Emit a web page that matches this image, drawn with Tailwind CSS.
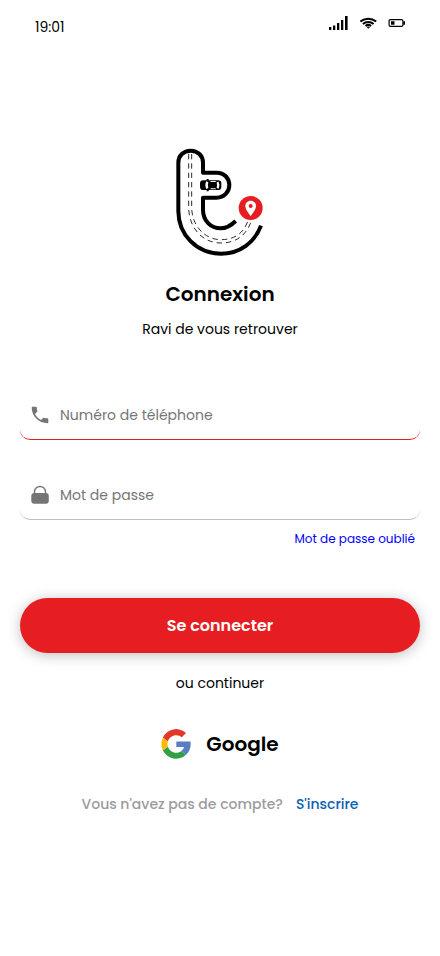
<!DOCTYPE html>
<html lang="fr">
<head>
<meta charset="utf-8">
<meta name="viewport" content="width=device-width, initial-scale=1">
<title>Connexion</title>
<script src="https://cdn.jsdelivr.net/npm/@tailwindcss/browser@4"></script>
</head>
<body class="min-h-screen bg-white text-black font-[Poppins,Inter,sans-serif]">
<header class="flex h-13 items-center justify-between pt-px pl-[35px] pr-[34px]">
  <time class="text-sm leading-5">19:01</time>
  <div class="flex items-center gap-[11px] pb-2">
    <svg class="h-4 w-5" viewBox="0 0 20 16" aria-hidden="true"><path d="M0 12h2.300v3H0zM4 10.500h2.300V15H4zM8 8h2.300v7H8zM12 5h2.300v10H12zM16 1h2.600v14H16z"/></svg>
    <svg class="h-4 w-[17px]" viewBox="0 0 17 16" fill="none" stroke="#000" stroke-width="2" aria-hidden="true"><path d="M.3 6.600C5 2.700 11.500 2.700 16.200 6.600M2.900 8.900c3-2.600 7.700-2.600 10.700 0M5.500 11c1.700-1.400 3.900-1.400 5.600 0"/><path fill="#000" stroke="none" d="M6.600 12q1.700-1.200 3.400 0l-1.700 1.800z"/></svg>
    <svg class="h-4 w-[18px]" viewBox="0 0 18 16" aria-hidden="true"><rect x="1.100" y="4.600" width="13.800" height="6.800" rx="1.300" fill="none" stroke="#000" stroke-width="1.200"/><path d="M3 6.200h3.500v3.600H3zM15.300 6.200H17v3.600h-1.700z"/></svg>
  </div>
</header>
<main class="flex flex-col items-center px-5 pt-22">
  <svg class="h-31 w-30" viewBox="0 0 360 372" fill="none" stroke="#000" role="img" aria-label="Logo">
    <path stroke-width="12" stroke-linejoin="round" d="M303 257C285 306 240 341 183 341C110 341 55 284 55 213V68C55 47 71 32 92 32S129 47 129 68V98H170C192 98 208 114 208 135S192 173 170 173H129V209C129 242 152 265 182 265C200 265 213 257 227 243"/>
    <path stroke-width="2.500" stroke-dasharray="16 12" d="M86 42V202C86 262 126 309 183 309C231 309 262 282 275 240M95 42V202C95 257 134 299 183 299C226 299 254 277 266 236"/>
    <g stroke="none">
      <rect x="120" y="121" width="64" height="29" rx="10" fill="#000"/>
      <path fill="#000" d="M140 117h6v5h-6zM140 149h6v5h-6z"/>
      <path fill="#fff" d="M139 124q-6 11 0 23l6-3q-3-8 0-17zM150 123h19l-3 3h-13zM150 148h19l-3-3h-13zM170 127l6-2q5 10 0 21l-6-2q2-8 0-17z"/>
      <circle cx="272" cy="204" r="36" fill="#e61e22"/>
      <path fill="#fff" fill-rule="evenodd" d="M272 182c-9 0-16 7-16 16 0 11 10 20 16 31 6-11 16-20 16-31 0-9-7-16-16-16zm0 10a6 6 0 1 1 0 12 6 6 0 0 1 0-12z"/>
    </g>
  </svg>
  <h1 class="mt-4 text-xl leading-7 font-semibold">Connexion</h1>
  <p class="mt-[11px] text-sm leading-5">Ravi de vous retrouver</p>
  <form class="mt-12 flex w-full flex-col">
    <label class="flex h-[53px] items-center gap-2 rounded-[10px] border-b border-[#e61e22] px-2 pt-1">
      <svg class="h-6 w-6 shrink-0" viewBox="-1 -1 26 26" fill="#757575" aria-hidden="true"><path d="M6.600 10.800c1.500 2.900 3.700 5.100 6.600 6.600l2.200-2.200c.3-.3.700-.4 1-.2 1.200.4 2.400.6 3.600.6.600 0 1 .4 1 1V20c0 .6-.4 1-1 1C10.600 21 3 13.400 3 4c0-.6.400-1 1-1h3.500c.6 0 1 .4 1 1 0 1.300.2 2.500.6 3.600.1.300 0 .7-.2 1z"/></svg>
      <input type="tel" aria-label="Numéro de téléphone" placeholder="Numéro de téléphone" class="h-8 min-w-0 flex-1 text-sm leading-8 outline-none placeholder:text-[#757575]">
    </label>
    <label class="mt-[27px] flex h-[53px] items-center gap-2 rounded-[10px] border-b border-[#bdbdbd] px-2 pt-1">
      <svg class="h-6 w-6 shrink-0" viewBox="0 0 24 24" aria-hidden="true"><rect x="3.300" y="10" width="17.500" height="10.700" rx="3" fill="#757575"/><path d="M6.500 11V9a5.500 5.500 0 0 1 11 0V11" fill="none" stroke="#757575" stroke-width="1.400"/></svg>
      <input type="password" aria-label="Mot de passe" placeholder="Mot de passe" class="h-8 min-w-0 flex-1 text-sm leading-8 outline-none placeholder:text-[#757575]">
    </label>
    <a href="#" class="mt-[11px] mr-[5px] self-end text-xs leading-4 text-[#0000ff]">Mot de passe oublié</a>
    <button type="submit" class="mt-[51px] h-[55px] w-full rounded-full bg-[#e61e22] text-base font-semibold text-white shadow-[0_2px_14px_rgba(0,0,0,0.25)]">Se connecter</button>
  </form>
  <p class="mt-5 text-sm leading-5">ou continuer</p>
  <button type="button" class="mt-9 flex items-center gap-[15px] text-xl leading-7 font-semibold">
    <svg class="h-[30px] w-[30px]" viewBox="0 0 47 48" aria-hidden="true"><path fill="#fbbc05" d="M9.800 24c0-1.500.3-3 .7-4.400L2.600 13.600A23.600 23.600 0 0 0 2.600 34.400l7.900-6A14 14 0 0 1 9.800 24z"/><path fill="#e43629" d="M24 10c3.300 0 6.300 1.200 8.700 3.100l6.800-6.800A23.400 23.400 0 0 0 2.600 13.600l8 6C12.400 14 17.700 10 24 10z"/><path fill="#319f43" d="M24 38c-6.300 0-11.600-4-13.400-9.600l-8 6.100A23.400 23.400 0 0 0 39.600 41l-7.500-5.800C30 37 27.100 38 24 38z"/><path fill="#587dc0" d="M47 24c0-1.400-.2-2.800-.5-4.200H24v9h12.400a10.600 10.600 0 0 1-4.300 6.400l7.500 5.800C44.500 37.100 47 31.200 47 24z"/></svg>
    Google
  </button>
  <p class="mt-[35px] text-sm leading-5 font-medium text-[#9b9b9f]">Vous n'avez pas de compte?<a href="#" class="ml-[13px] text-[#0b61b4]">S'inscrire</a></p>
</main>
</body>
</html>
